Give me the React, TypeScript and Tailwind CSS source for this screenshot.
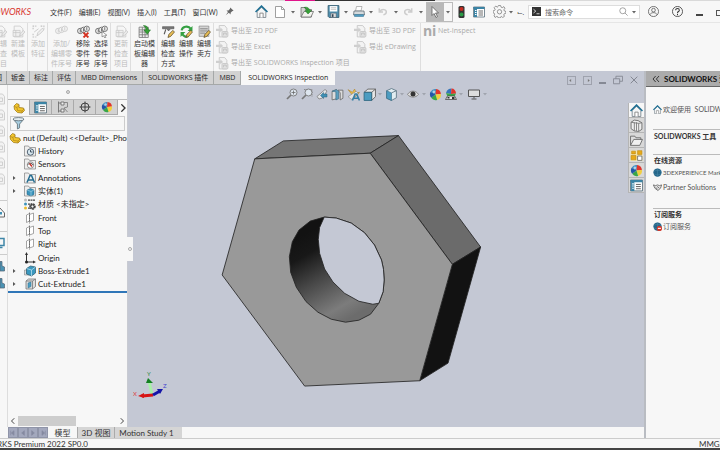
import type { ReactNode } from "react";

type IconProps = { className?: string; faded?: boolean };

const Svg = ({
	className = "size-3",
	children,
	box = "0 0 24 24",
}: {
	className?: string;
	children: ReactNode;
	box?: string;
}) => (
	<svg viewBox={box} className={`shrink-0 ${className}`} fill="none" aria-hidden="true">
		{children}
	</svg>
);

const Caret = ({ light }: { light?: boolean }) => (
	<Svg className="size-1" box="0 0 8 8">
		<path d="M0 2h8L4 7z" fill={light ? "#a0a4ae" : "#666"} />
	</Svg>
);

const HomeIcon = ({ className }: IconProps) => (
	<Svg className={className}>
		<path d="M4 12v11h16V12l-8-8z" fill="#f4f6f7" stroke="#6f7d85" strokeWidth="1.5" />
		<path d="M9 23v-8h6v8" fill="#fff" stroke="#777" strokeWidth="1.5" />
		<path d="M1 13L12 2l11 11" stroke="#1f6f93" strokeWidth="3" />
	</Svg>
);

const NewIcon = () => (
	<Svg className="h-3 w-[10px]" box="0 0 20 24">
		<path d="M1 1h12l6 6v16H1z" fill="#fff" stroke="#888" strokeWidth="1.6" />
		<path d="M13 1v6h6" stroke="#888" strokeWidth="1.6" />
	</Svg>
);

const OpenIcon = () => (
	<Svg className="h-3 w-[14px]" box="0 0 28 24">
		<path d="M2 22V3h9v4h12v15z" fill="#d5d5d2" stroke="#666" strokeWidth="1.5" />
		<path d="M2 22l6-11h19l-5 11z" fill="#f2f2ee" stroke="#666" strokeWidth="1.5" />
		<path d="M8 3c6-2 11 1 11 6h4l-7 7-6-7h4c0-2-2-4-6-6z" fill="#37a237" stroke="#1e7022" />
	</Svg>
);

const SaveIcon = () => (
	<Svg className="size-[13px]">
		<path d="M2 1h20v22H4l-2-2z" fill="#4f8fae" stroke="#355b6e" strokeWidth="1.5" />
		<path d="M5 2h14v10H5z" fill="#fff" />
		<path d="M7 5h10M7 8h10" stroke="#999" />
		<path d="M7 15h10v8H7z" fill="#ddd" stroke="#456" />
		<path d="M9 17h3v5H9z" fill="#345" />
	</Svg>
);

const PrintIcon = () => (
	<Svg className="size-3">
		<path d="M7 1h11l-2 9H5z" fill="#fff" stroke="#777" />
		<path d="M2 10h20l1 8H1z" fill="#d4d9dc" stroke="#5c6870" strokeWidth="1.5" />
		<path d="M3 17h18v4H3z" fill="#4f9bc1" stroke="#336f8d" />
	</Svg>
);

const UndoIcon = ({ className }: IconProps) => (
	<Svg className={className}>
		<path d="M3 3v9h9M4 11c5-7 16-6 16 1 0 4-3 6-7 7" stroke="#ccc" strokeWidth="3.5" />
	</Svg>
);

const PointerIcon = () => (
	<Svg className="h-3 w-2" box="0 0 16 24">
		<path d="M2 1v18l4-4 4 8 3-2-4-7h6z" fill="#fff" stroke="#555" strokeWidth="1.5" />
	</Svg>
);

const TrafficIcon = () => (
	<Svg className="h-3 w-[7px]" box="0 0 14 24">
		<rect x="1" width="12" height="24" rx="3" fill="#333" />
		<circle cx="7" cy="6" r="4" fill="#c52c22" />
		<circle cx="7" cy="17" r="4" fill="#299b45" />
	</Svg>
);

const ListIcon = ({ className }: IconProps) => (
	<Svg className={className}>
		<path d="M1 2h22v20H1z" fill="#fff" stroke="#506774" strokeWidth="1.5" />
		<path d="M1 2h22v4H1zM2 6h6v16H2z" fill="#3b84a5" />
		<path d="M4 9h3M4 13h3M4 17h3" stroke="#fff" strokeWidth="2" />
		<path d="M11 10h9M11 14h9M11 18h9" stroke="#555" strokeWidth="1.7" />
	</Svg>
);

const GearIcon = () => (
	<Svg className="size-[13px]">
		<path
			d="M10 1h4l1 3 2 1 3-2 2 3-2 3 1 2 3 1v3l-3 1-1 2 1 3-3 2-3-2-1 1-1 2h-3l-1-2-2-1-3 2-2-3 1-3-1-2-2-1v-3l3-1 1-2-2-3 3-3 3 2 1-1z"
			stroke="#777"
			strokeWidth="1.4"
		/>
		<circle cx="12" cy="12.5" r="4" stroke="#777" strokeWidth="1.4" />
	</Svg>
);

const SheetIcon = ({ faded }: IconProps) => (
	<Svg className={faded ? "size-[13px] opacity-30" : "size-[13px]"}>
		<path d="M4 2h11l5 5v15H4z" fill="#f4f4f4" stroke="#666" strokeWidth="1.5" />
		<path d="M2 10h13v11H2zM2 14h13M7 10v11" fill="#ddd" stroke="#555" strokeWidth="1.3" />
		<path d="M14 20l2-5 5-5 3 3-6 6z" fill="#ccc" stroke="#555" strokeWidth="1.3" />
	</Svg>
);

const FeatureIcon = () => (
	<Svg className="size-[13px] opacity-30">
		<path d="M2 8V2h6M16 2h6v6M2 16v6h6" stroke="#444" strokeWidth="2" strokeDasharray="3 2" />
		<path d="M4 13l8-6M9 20l2-6 8-8 3 3-8 8z" fill="#ddd" stroke="#555" strokeWidth="1.5" />
	</Svg>
);

const BalloonIcon = ({ kind = "add" }: { kind?: string }) => (
	<Svg className={kind === "add" ? "size-[13px] opacity-30" : "size-[13px]"}>
		<circle cx="6" cy="11" r="5" fill="#eee" stroke="#555" strokeWidth="1.4" />
		<circle cx="12" cy="9" r="5" fill="#eee" stroke="#555" strokeWidth="1.4" />
		<circle cx="18" cy="7" r="5" fill="#eee" stroke="#555" strokeWidth="1.4" />
		<path d="M6 8v6M12 6v6M18 4v6" stroke="#555" strokeWidth="1.4" />
		{kind === "remove" && <path d="M12 14l9 9M21 14l-9 9" stroke="#d5301f" strokeWidth="3.5" />}
		{kind === "select" && <path d="M13 12v10l3-2 2 4 2-1-2-4h4z" fill="#fff" stroke="#555" />}
	</Svg>
);

const TemplateIcon = () => (
	<Svg className="size-[13px]">
		<path d="M2 4h17v19H2zM2 9h17M2 13h17M2 18h17M8 4v19M13 4v19" fill="#eee" stroke="#777" strokeWidth="1.5" />
		<path d="M10 1c6 0 9 3 9 8h4l-6 8-6-8h4c0-3-2-6-5-8z" fill="#37a237" stroke="#1e7022" />
	</Svg>
);

const Pencil = () => (
	<path d="M11 23l2-6 7-7 3 3-7 8z" fill="#e9bf56" stroke="#5b4a28" strokeWidth="1.4" />
);

const CaliperIcon = () => (
	<Svg className="size-[13px]">
		<path d="M1 3h21v4h-6l-4 4-3-4H1z" fill="#777" stroke="#444" />
		<path d="M7 8l-3 9" stroke="#555" strokeWidth="2" />
		<Pencil />
	</Svg>
);

const CycleIcon = () => (
	<Svg className="size-[13px]">
		<path d="M3 10c1-7 12-10 17-3" stroke="#35a043" strokeWidth="4" />
		<path d="M23 2v9h-9zM1 22v-9h9z" fill="#35a043" />
		<path d="M4 16c2 5 7 7 12 4" stroke="#35a043" strokeWidth="4" />
		<Pencil />
	</Svg>
);

const NotesIcon = () => (
	<Svg className="size-[13px]">
		<path d="M2 2h18v19H2z" fill="#d5d5d5" stroke="#888" strokeWidth="1.3" />
		<path d="M4 7h14M4 11h14M4 15h9" stroke="#777" strokeWidth="1.5" />
		<Pencil />
	</Svg>
);

const ExportIcon = () => (
	<Svg className="size-[13px] opacity-35">
		<path d="M6 6V1h10l4 5v16H6z" fill="#eee" stroke="#666" strokeWidth="1.5" />
		<path d="M0 7h8V4l5 5-5 5v-3H0z" fill="#888" />
		<rect x="11" y="12" width="11" height="10" rx="2" fill="#bbb" stroke="#666" strokeWidth="1.5" />
		<path d="M14 19v-4h5v4" stroke="#555" strokeWidth="1.5" />
	</Svg>
);

const PartIcon = ({ className }: IconProps) => (
	<Svg className={className}>
		<path d="M2 8l5-5 5 2v6l9 1 2 5-5 5-9-1-6-6z" fill="#f2c62e" stroke="#9b7615" strokeWidth="1.5" />
		<path d="M3 9l5 2 1 6 9 1 4-4M8 11l4-4M18 18v3" stroke="#a77f18" strokeWidth="1.3" />
	</Svg>
);

const ConfigIcon = () => (
	<Svg>
		<path d="M3 1v22M3 4h6M3 20h6" stroke="#666" strokeWidth="1.6" />
		<path d="M8 2h6v6H8zM8 16h6v6H8z" fill="#eee" stroke="#666" strokeWidth="1.6" />
		<path d="M14 3h7v9l-7 2 7 8" stroke="#777" strokeWidth="1.6" />
	</Svg>
);

const TargetIcon = () => (
	<Svg>
		<circle cx="12" cy="12" r="8" stroke="#333" strokeWidth="1.8" />
		<path d="M12 1v22M1 12h22" stroke="#333" strokeWidth="1.8" />
	</Svg>
);

const BallIcon = ({ className }: IconProps) => (
	<Svg className={className}>
		<path d="M12 12L3 7a10 10 0 0 1 10-5z" fill="#3a8ec4" />
		<path d="M12 12l1-10a10 10 0 0 1 9 9z" fill="#e0342c" />
		<path d="M12 12l10-1a10 10 0 0 1-7 11z" fill="#f2cf3f" />
		<path d="M12 12l3 10a10 10 0 0 1-11-4z" fill="#3aa648" />
		<path d="M12 12l-8 6A10 10 0 0 1 3 7z" fill="#2257a8" />
		<circle cx="9" cy="7" r="2.5" fill="#fff" opacity=".6" />
	</Svg>
);

const FunnelIcon = () => (
	<Svg className="size-[13px]">
		<path d="M2 4l8 9v9l4-2v-7l8-9z" fill="#a9cfe2" stroke="#5a6a73" strokeWidth="1.5" />
		<ellipse cx="12" cy="4" rx="10" ry="3" fill="#e5eef2" stroke="#5a6a73" strokeWidth="1.5" />
	</Svg>
);

const FolderIcon = ({ children }: { children: ReactNode }) => (
	<Svg>
		<path d="M1 22V2h8l2 3h12v17z" fill="#eee" stroke="#888" strokeWidth="1.5" />
		{children}
	</Svg>
);

const HistoryIcon = () => (
	<FolderIcon>
		<circle cx="13" cy="14" r="6.5" fill="#d7e7ef" stroke="#456" strokeWidth="1.8" />
		<path d="M13 10v4h4" stroke="#345" strokeWidth="1.8" />
	</FolderIcon>
);

const SensorIcon = () => (
	<FolderIcon>
		<circle cx="13" cy="14" r="6.5" fill="#fff" stroke="#777" strokeWidth="1.5" />
		<path d="M8 13c1-3 8-4 10 1" stroke="#444" strokeWidth="2" />
		<path d="M11 11l5 6" stroke="#c73027" strokeWidth="3" />
	</FolderIcon>
);

const AnnotationIcon = () => (
	<FolderIcon>
		<path d="M6 21l6-14h3l6 14M9 16h9" stroke="#246d91" strokeWidth="3" />
	</FolderIcon>
);

const SolidIcon = () => (
	<FolderIcon>
		<path d="M6 10l7-3 7 3v9l-6 3-8-3z" fill="#3b94bc" stroke="#1e5f7e" />
		<path d="M6 10l8 3 6-3M14 13v9" stroke="#c6e5f1" />
	</FolderIcon>
);

const MaterialIcon = () => (
	<Svg>
		<circle cx="3" cy="4" r="3" fill="#bbb" />
		<circle cx="3" cy="12" r="3" fill="#3d93bb" />
		<circle cx="3" cy="20" r="3" fill="#e9bb2e" />
		<path d="M8 4h15M8 12h8M8 20h4" stroke="#444" strokeWidth="2.5" strokeDasharray="4 1" />
		<circle cx="17" cy="17" r="4.5" stroke="#444" strokeWidth="4" strokeDasharray="3 1" />
		<circle cx="17" cy="17" r="3.5" stroke="#444" strokeWidth="2" />
	</Svg>
);

const PlaneIcon = () => (
	<Svg>
		<path d="M5 6l6-3v15l-6 3zM11 5l8-3v15l-8 3z" fill="#fff" stroke="#888" strokeWidth="1.5" />
		<path d="M11 1v22" stroke="#555" strokeWidth="1.3" strokeDasharray="3 2" />
	</Svg>
);

const OriginIcon = () => (
	<Svg>
		<path d="M5 3v17h15" stroke="#333" strokeWidth="2" />
		<path d="M5 0L2 6h6zM24 20l-6-3v6z" fill="#333" />
		<circle cx="5" cy="20" r="3" fill="#222" />
	</Svg>
);

const ExtrudeIcon = () => (
	<Svg>
		<path d="M1 10h9v10H1z" fill="#ddd" stroke="#777" />
		<path d="M5 7l8-5 10 2v12l-8 6-10-4z" fill="#3a98bf" stroke="#28596f" strokeWidth="1.4" />
		<path d="M5 7l10 3 8-6M15 10v12" stroke="#bde1ef" strokeWidth="1.5" />
	</Svg>
);

const CutIcon = () => (
	<Svg>
		<path d="M4 6l5-4h14v15l-6 5H4z" fill="#ddd" stroke="#777" strokeWidth="1.6" />
		<path d="M17 22V6l6-4M4 6h13" stroke="#777" strokeWidth="1.6" />
		<path d="M8 10l6-2v9l-6 3z" fill="#4b9fc4" stroke="#326e88" />
	</Svg>
);

const ZoomIcon = ({ area }: { area?: boolean }) => (
	<Svg>
		{area && <path d="M6 3h16v15" stroke="#777" strokeWidth="1.5" strokeDasharray="3 2" />}
		<path d="M10 14L2 22" stroke="#777" strokeWidth="3.5" />
		<circle cx="15" cy="9" r="7" fill="#dde5ee" stroke="#777" strokeWidth="1.8" />
		{!area && <path d="M15 5v8M11 9h8" stroke="#666" strokeWidth="1.5" />}
	</Svg>
);

const PreviousViewIcon = () => (
	<Svg>
		<path d="M2 17L18 3l4 3-9 14-7 2z" fill="#e3e5e8" stroke="#777" strokeWidth="1.5" />
		<path d="M9 15l6-6v3h7v6h-7v3z" fill="#3f8fb4" stroke="#2c657f" />
	</Svg>
);

const SectionIcon = () => (
	<Svg className="size-[13px]">
		<path d="M2 6l8-3v17l-8 2zM13 4h9v15l-5 3V9z" fill="#dcdcdc" stroke="#666" strokeWidth="1.5" />
		<path d="M2 6l8-3 4 3v14l-5 2V7z" fill="#5b9fbf" stroke="#2c657f" />
	</Svg>
);

const DynamicIcon = () => (
	<Svg className="size-[13px]">
		<path d="M2 3l8 5 4-6 3 7 6-1-5 6-5 3z" fill="#efc24c" stroke="#a77c26" />
		<path d="M2 16L17 6l4 4L8 21z" fill="#e4e4e4" stroke="#777" />
		<path d="M10 23l5-12h3l5 12M12 19h9" stroke="#377fa4" strokeWidth="3" />
	</Svg>
);

const CubeIcon = ({ flat }: { flat?: boolean }) => (
	<Svg className="size-[13px]">
		{flat ? (
			<>
				<path d="M2 8L9 2h14v14l-7 7V8z" fill="#e7e7e7" stroke="#555" strokeWidth="1.5" />
				<path d="M2 8h14v15H2z" fill="#4b9cc1" stroke="#2c657f" strokeWidth="1.5" />
				<path d="M16 8l7-6" stroke="#555" strokeWidth="1.5" />
			</>
		) : (
			<>
				<path d="M3 5l9-4 9 4v13l-9 5-9-4z" fill="#e1edf1" stroke="#55707f" strokeWidth="1.5" />
				<path d="M3 5l9 4v14l-9-4z" fill="#4b9cc1" stroke="#2c657f" />
				<path d="M12 9l9-4" stroke="#55707f" strokeWidth="1.5" />
			</>
		)}
	</Svg>
);

const EyeIcon = () => (
	<Svg>
		<path d="M1 13c5-9 17-9 22 0-6 7-16 7-22 0z" fill="#ddd" stroke="#888" strokeWidth="2" />
		<circle cx="12" cy="12" r="5" fill="#333" />
	</Svg>
);

const SceneIcon = () => (
	<Svg>
		<path d="M12 12L2 10C4 3 8 1 13 1z" fill="#3575b9" />
		<path d="M12 12l1-11c5 0 9 4 9 10z" fill="#e0342c" />
		<path d="M2 10l10 2 10-1-3 6H5z" fill="#3aa648" />
		<path d="M1 23l4-7h14l4 7z" fill="#e8e8e8" stroke="#444" strokeWidth="1.5" />
		<path d="M5 18h4v3H5zM14 18h5v4h-5z" fill="#333" />
	</Svg>
);

const MonitorIcon = () => (
	<Svg>
		<path d="M1 4h22v13H1z" fill="#ddd" stroke="#555" strokeWidth="2" />
		<path d="M12 17v4M7 22h10" stroke="#555" strokeWidth="2" />
	</Svg>
);

const LibraryIcon = () => (
	<Svg className="size-[13px]">
		<path d="M2 6l6-4 7 1 7 4v12l-6 4-8-1-6-4z" fill="#eee" stroke="#666" strokeWidth="1.6" />
		<path d="M8 6v16M12 6v16M16 8v15M2 6l6 1 8 1 6-1" stroke="#777" strokeWidth="1.6" />
	</Svg>
);

const FilesIcon = () => (
	<Svg className="size-[13px]">
		<path d="M1 21V4h8l2 3h9v4" fill="#ddd" stroke="#666" strokeWidth="1.6" />
		<path d="M1 21l6-11h16l-5 11z" fill="#f0f0f0" stroke="#666" strokeWidth="1.6" />
	</Svg>
);

const PaletteIcon = () => (
	<Svg className="size-[13px]">
		<path d="M1 3h22v19H1z" fill="#f7e7ab" />
		<path d="M3 4h7v5H3zM2 12h9v8H2zM14 3h8v7h-8z" fill="#e7aa18" stroke="#b58112" />
		<path d="M14 13h8v8h-8z" fill="#fff" stroke="#666" strokeWidth="1.5" />
	</Svg>
);

const GlobeIcon = ({ badge }: { badge?: boolean }) => (
	<Svg className="size-[9px]">
		<circle cx="12" cy="12" r="11" fill="#24668a" />
		<path d="M2 9c7-4 13-4 20 0M12 1v22M3 16c6 3 12 3 18 0" stroke="#4f8cab" strokeWidth="1.2" />
		{badge && <circle cx="17" cy="17" r="7" fill="#d0382c" />}
		{badge && <path d="M13 17h8" stroke="#fff" strokeWidth="3" />}
	</Svg>
);

const PartnerIcon = () => (
	<Svg className="size-[9px]">
		<path d="M1 5l6 2 5-2 5 2 6-2-3 9-7 6-8-6z" fill="#e5e5e5" stroke="#555" strokeWidth="2" />
		<path d="M7 12l5 4M11 9l6 5" stroke="#555" strokeWidth="2" />
	</Svg>
);

const PinIcon = () => (
	<Svg className="size-[9px]">
		<path d="M14 1l9 9-4 1-4 4v5l-5-5-8 7 6-9-4-4h5l4-4z" fill="#666" />
	</Svg>
);

const menus = ["文件(F)", "编辑(E)", "视图(V)", "插入(I)", "工具(T)", "窗口(W)"];

type Command = { lines: string[]; icon: ReactNode; off?: boolean; wide?: boolean };

const ribbon: Command[][] = [
	[
		{ lines: ["编辑", "检查", "项目"], icon: <SheetIcon faded />, off: true },
		{ lines: ["新建", "模板"], icon: <SheetIcon faded />, off: true },
	],
	[{ lines: ["添加", "特征"], icon: <FeatureIcon />, off: true }],
	[
		{ lines: ["添加/", "编辑零", "件序号"], icon: <BalloonIcon />, off: true, wide: true },
		{ lines: ["移除", "零件", "序号"], icon: <BalloonIcon kind="remove" /> },
		{ lines: ["选择", "零件", "序号"], icon: <BalloonIcon kind="select" /> },
	],
	[{ lines: ["更新", "检查", "项目"], icon: <SheetIcon faded />, off: true }],
	[{ lines: ["启动模", "板编辑", "器"], icon: <TemplateIcon />, wide: true }],
	[
		{ lines: ["编辑", "检查", "方式"], icon: <CaliperIcon /> },
		{ lines: ["编辑", "操作"], icon: <CycleIcon /> },
		{ lines: ["编辑", "卖方"], icon: <NotesIcon /> },
	],
];

const tabs = ["图", "钣金", "标注", "评估", "MBD Dimensions", "SOLIDWORKS 插件", "MBD"];

const tree = [
	{ label: "History", icon: <HistoryIcon /> },
	{ label: "Sensors", icon: <SensorIcon /> },
	{ label: "Annotations", icon: <AnnotationIcon />, open: true },
	{ label: "实体(1)", icon: <SolidIcon />, open: true },
	{ label: "材质 <未指定>", icon: <MaterialIcon /> },
	{ label: "Front", icon: <PlaneIcon /> },
	{ label: "Top", icon: <PlaneIcon /> },
	{ label: "Right", icon: <PlaneIcon /> },
	{ label: "Origin", icon: <OriginIcon /> },
	{ label: "Boss-Extrude1", icon: <ExtrudeIcon />, open: true },
	{ label: "Cut-Extrude1", icon: <CutIcon />, open: true },
];

const TitleBar = () => (
	<header className="flex h-[21px] shrink-0 items-center bg-[#f7f7f7] text-[7px] text-[#333]">
		<div className="flex w-[31px] shrink-0 justify-end overflow-hidden text-[9px] italic text-[#d8352e]">
			<b>SOLID</b>WORKS
		</div>
		<nav className="ml-[19px] flex shrink-0 gap-[7px]">
			{menus.map((name) => (
				<button key={name} className="whitespace-nowrap">
					{name}
				</button>
			))}
		</nav>
		<button aria-label="Pin" className="ml-[3px] flex w-[18px] shrink-0 justify-center">
			<PinIcon />
		</button>
		<div className="ml-4 flex shrink-0 items-center gap-[5px]">
			<button aria-label="Home" className="mr-[2px]"><HomeIcon className="size-[13px]" /></button>
			<button aria-label="New" className="flex items-center gap-[6px]"><NewIcon /><Caret /></button>
			<button aria-label="Open" className="flex items-center gap-1"><OpenIcon /><Caret /></button>
			<button aria-label="Save" className="flex items-center gap-1"><SaveIcon /><Caret /></button>
			<button aria-label="Print" className="flex items-center gap-1"><PrintIcon /><Caret /></button>
			<button aria-label="Undo" className="flex items-center gap-[6px]"><UndoIcon className="size-[10px]" /><Caret /></button>
			<button aria-label="Redo" className="flex items-center gap-[6px]"><UndoIcon className="size-[10px] -scale-x-100" /><Caret /></button>
		</div>
		<button aria-label="Select" className="ml-[3px] flex h-5 shrink-0 items-center border border-[#bbb]">
			<span className="flex h-full w-[17px] items-center justify-center bg-[#b8b8b8]"><PointerIcon /></span>
			<span className="px-[2px]"><Caret /></span>
		</button>
		<div className="ml-[5px] flex shrink-0 items-center gap-2">
			<button aria-label="Rebuild"><TrafficIcon /></button>
			<button aria-label="Options list"><ListIcon className="size-3" /></button>
			<button aria-label="Settings" className="flex items-center gap-[3px]"><GearIcon /><Caret /></button>
		</div>
		<span className="ml-1 text-[#444]">⌙.</span>
		<div className="ml-auto flex h-[14px] w-[112px] shrink-0 items-center gap-1 border border-[#ddd] bg-white px-[3px]">
			<Svg className="size-[9px]">
				<path d="M0 0h24v24H0z" fill="#333" />
				<path d="M4 6l6 5-6 5M12 18h8" stroke="#fff" strokeWidth="2" />
			</Svg>
			<input
				aria-label="搜索命令"
				placeholder="搜索命令"
				className="min-w-0 flex-1 bg-transparent text-[7px] outline-none placeholder:text-[#666]"
			/>
			<Svg className="size-[9px]">
				<circle cx="10" cy="10" r="8" stroke="#888" strokeWidth="2" />
				<path d="M16 16l7 7" stroke="#888" strokeWidth="2" />
			</Svg>
			<Caret />
		</div>
		<div className="ml-2 flex shrink-0 items-center gap-[13px]">
			<button aria-label="Account">
				<Svg className="size-[11px]">
					<circle cx="12" cy="12" r="11" stroke="#555" strokeWidth="1.7" />
					<circle cx="12" cy="9" r="4" stroke="#555" strokeWidth="1.7" />
					<path d="M4 19c3-6 13-6 16 0" stroke="#555" strokeWidth="1.7" />
				</Svg>
			</button>
			<button aria-label="Help">
				<Svg className="size-[11px]">
					<circle cx="12" cy="12" r="11" stroke="#333" strokeWidth="1.7" />
					<path d="M8 9c0-5 8-5 8 0 0 3-4 3-4 6M12 17v3" stroke="#333" strokeWidth="2.2" />
				</Svg>
			</button>
			<button aria-label="Minimize" className="mt-[6px] h-[2px] w-[7px] bg-[#444]" />
			<button aria-label="Maximize" className="mt-[2px] h-[6px] w-1 border border-r-0 border-[#555]" />
		</div>
	</header>
);

const ExportItem = ({ label }: { label: string }) => (
	<button disabled className="flex h-4 items-center gap-[2px] whitespace-nowrap">
		<ExportIcon />
		{label}
	</button>
);

const Ribbon = () => (
	<div className="flex h-[49px] shrink-0 overflow-hidden border-t border-[#e6e6e6] bg-[#f7f7f7] text-[7px]">
		<div className="-ml-[10px] flex shrink-0">
			{ribbon.map((group, i) => (
				<div key={i} className="flex border-r border-[#dedede] pl-px">
					{group.map((cmd) => (
						<button
							key={cmd.lines.join("")}
							disabled={cmd.off}
							className={`flex flex-col items-center pt-[2px] leading-[10px] ${
								cmd.wide ? "w-[25px]" : "w-[18px]"
							} ${cmd.off ? "text-[#bcbcbc]" : "text-[#333]"}`}>
							{cmd.icon}
							{cmd.lines.map((line) => (
								<span key={line} className="whitespace-nowrap">
									{line}
								</span>
							))}
						</button>
					))}
				</div>
			))}
		</div>
		<div className="flex shrink-0 border-r border-[#dedede] pr-1 font-['Open_Sans','Noto_Sans_CJK_SC',sans-serif] text-[#aaa]">
			<div className="w-[140px] pl-[2px]">
				<ExportItem label="导出至 2D PDF" />
				<ExportItem label="导出至 Excel" />
				<ExportItem label="导出至 SOLIDWORKS Inspection 项目" />
			</div>
			<div>
				<ExportItem label="导出至 3D PDF" />
				<ExportItem label="导出 eDrawing" />
			</div>
		</div>
		<button
			disabled
			className="ml-[2px] flex h-4 items-center gap-[2px] font-['Open_Sans',sans-serif] text-[#aaa]">
			<b className="w-[13px] text-[14px] leading-4">ni</b>
			Net-Inspect
		</button>
	</div>
);

const TabRow = () => (
	<div className="flex h-[14px] shrink-0 items-center justify-between bg-[#c4c8d4]">
		<div className="-ml-[9px] flex h-full min-w-0 font-['Open_Sans','Noto_Sans_CJK_SC',sans-serif] text-[7px] text-[#222]">
			{tabs.map((name) => (
				<button
					key={name}
					className={`whitespace-nowrap border-b border-r border-[#a5a8a8] bg-[#d2d2d2] ${
						name.length > 2 ? "px-[5px]" : "px-1"
					}`}>
					{name}
				</button>
			))}
			<button className="whitespace-nowrap bg-[#f7f7f7] px-[7px]">SOLIDWORKS Inspection</button>
		</div>
		<div className="flex items-center gap-[7px] pr-[6px] pt-1">
			{["M11 8l-5 4 5 4z", "M13 8l5 4-5 4z"].map((d) => (
				<button key={d} aria-label="Dock">
					<Svg className="size-[9px]">
						<path d="M1 1h22v22H1z" stroke="#8b8f99" strokeWidth="2" />
						<path d={d} fill="#777" />
					</Svg>
				</button>
			))}
			<button aria-label="Minimize document" className="mt-[6px] h-[2px] w-[7px] bg-[#858994]" />
			<button aria-label="Restore document">
				<Svg className="size-[10px]">
					<path d="M1 9h15v12H1zM7 9V3h16v12h-7" stroke="#858994" strokeWidth="2.2" />
				</Svg>
			</button>
			<button aria-label="Close document">
				<Svg className="size-2">
					<path d="M2 2l20 20M22 2L2 22" stroke="#777b85" strokeWidth="2.5" />
				</Svg>
			</button>
		</div>
	</div>
);

const SideStrip = () => (
	<div className="flex w-2 shrink-0 flex-col overflow-hidden border-r border-[#ddd] bg-[#f7f7f7] pt-2">
		{[1, 2, 3, 4, 5, 6].map((n) => (
			<Svg key={n} className="mb-1 h-3 w-[5px]" box="0 0 10 24">
				<path d="M0 2h5l4 5v15H0M0 10h5v7H0" fill="#f2f2f2" stroke="#ccc" strokeWidth="1.8" />
			</Svg>
		))}
		<div className="mt-[11px] border-t border-[#ccc] pt-[6px]">
			<Svg className="h-3 w-[5px]" box="0 0 10 24">
				<path d="M0 2l9 10v8H0" stroke="#666" strokeWidth="2" />
				<path d="M0 10h4v5H0z" fill="#3f8fb4" />
			</Svg>
		</div>
		<div className="mt-3 border-y border-[#ccc] py-[5px]">
			<Svg className="h-3 w-[5px]" box="0 0 10 24">
				<path d="M0 3h8v14H0M0 21h5" stroke="#3f86a8" strokeWidth="3" />
			</Svg>
		</div>
		{[1, 2].map((n) => (
			<Svg key={n} className="mt-[5px] h-3 w-[5px]" box="0 0 10 24">
				<path d="M0 3h4v9l5 2v8H0z" fill="#4a93b4" stroke="#567" strokeWidth="1.5" />
			</Svg>
		))}
	</div>
);

const FeatureManager = () => (
	<section className="relative z-10 flex w-[120px] shrink-0 flex-col border-r border-[#c9cbd2] bg-[#f7f7f7]">
		<div className="flex h-[14px] shrink-0 items-center justify-center">
			<span className="size-1 rounded-full border border-[#aaa] bg-[#ddd]" />
		</div>
		<div className="flex h-4 shrink-0 border-t border-[#bbb]">
			{[
				{ name: "Features", icon: <PartIcon className="size-3" /> },
				{ name: "Properties", icon: <ListIcon className="size-[13px]" /> },
				{ name: "Configurations", icon: <ConfigIcon /> },
				{ name: "Dimensions", icon: <TargetIcon /> },
				{ name: "Display", icon: <BallIcon className="size-3" /> },
			].map((tab, i) => (
				<button
					key={tab.name}
					aria-label={tab.name}
					className={`flex w-[22px] items-center justify-center border-r border-[#aaa] ${
						i === 0 ? "" : "border-b bg-[#d2d2d2]"
					}`}>
					{tab.icon}
				</button>
			))}
			<button aria-label="More" className="flex flex-1 items-center justify-center">
				<Svg className="size-2">
					<path d="M7 1l11 11L7 23" stroke="#333" strokeWidth="4" />
				</Svg>
			</button>
		</div>
		<div className="mx-[2px] mt-px flex h-[15px] shrink-0 items-center border border-[#ccc] pl-px">
			<FunnelIcon />
		</div>
		<ul className="grid h-[162px] shrink-0 grid-rows-12 overflow-hidden border-b-2 border-[#2f76b8] text-[#222]">
			<li className="flex items-center gap-[2px] whitespace-nowrap pl-px">
				<PartIcon className="size-3" />
				nut (Default) &lt;&lt;Default&gt;_Photo
			</li>
			{tree.map((node) => (
				<li key={node.label} className="flex items-center gap-[2px] whitespace-nowrap pl-1">
					<span className="flex w-[10px] shrink-0">
						{node.open && (
							<Svg className="size-1" box="0 0 8 8">
								<path d="M2 0l5 4-5 4z" fill="#555" />
							</Svg>
						)}
					</span>
					{node.icon}
					{node.label}
				</li>
			))}
		</ul>
		<div className="mt-auto flex h-[13px] shrink-0 items-center px-[2px]">
			<Svg className="size-[6px]">
				<path d="M17 1L6 12l11 11" stroke="#444" strokeWidth="4" />
			</Svg>
			<div className="mx-[2px] h-[10px] flex-1">
				<div className="h-full w-7/12 bg-[#cdcdcd]" />
			</div>
			<Svg className="size-[6px]">
				<path d="M7 1l11 11L7 23" stroke="#444" strokeWidth="4" />
			</Svg>
		</div>
		<button
			aria-label="Collapse panel"
			className="absolute -right-[6px] top-[152px] flex h-6 w-[6px] items-center justify-center bg-[#f7f7f7]">
			<span className="size-1 rounded-full border border-[#aaa]" />
		</button>
	</section>
);

const ViewToolbar = () => (
	<div className="flex h-[18px] shrink-0 items-center justify-center gap-[3px]">
		<button aria-label="Zoom to fit"><ZoomIcon /></button>
		<button aria-label="Zoom to area"><ZoomIcon area /></button>
		<button aria-label="Previous view"><PreviousViewIcon /></button>
		<button aria-label="Section view"><SectionIcon /></button>
		<button aria-label="Dynamic annotation"><DynamicIcon /></button>
		<button aria-label="View orientation" className="flex items-center gap-[2px]"><CubeIcon flat /><Caret light /></button>
		<button aria-label="Display style" className="flex items-center gap-[2px]"><CubeIcon /><Caret light /></button>
		<button aria-label="Hide items" className="flex items-center gap-[3px]"><EyeIcon /><Caret light /></button>
		<button aria-label="Appearance"><BallIcon className="size-[13px]" /></button>
		<button aria-label="Scene" className="flex items-center gap-[2px]"><SceneIcon /><Caret light /></button>
		<button aria-label="View settings" className="ml-[2px] flex items-center gap-[3px]"><MonitorIcon /><Caret light /></button>
	</div>
);

const Nut = () => (
	<svg viewBox="128 103 517 324" className="min-h-0 w-full flex-1" role="img" aria-label="Hex nut">
		<defs>
			<linearGradient id="bore" gradientUnits="userSpaceOnUse" x1="270" y1="350" x2="410" y2="600">
				<stop offset="0" stopColor="#121212" />
				<stop offset=".2" stopColor="#181818" />
				<stop offset=".5" stopColor="#484848" />
				<stop offset=".85" stopColor="#7c7c7c" />
				<stop offset="1" stopColor="#6c6c6c" />
			</linearGradient>
		</defs>
		<g transform="translate(210 120) scale(.3333)" stroke="#222" strokeWidth="2.5" strokeLinejoin="round">
			<path d="M135 116l86-54 346-16-85 53z" fill="#757575" />
			<path d="M482 99l85-53 247 335-85 52z" fill="#6b6b6b" />
			<path d="M729 433l85-52-98 349-85 53z" fill="#121212" />
			<path d="M135 116l347-17 247 334-98 350-346 16L37 465z" fill="#999" />
			<path
				d="M344 291l-42 12-34 27-20 35-9 45 4 47 17 45 29 43 36 32 40 21 43 9 40-6 35-18 25-33 13-35 3-35-2-32-6-28-21-45-30-37-40-29-45-15z"
				fill="url(#bore)"
			/>
			<path
				d="M344 291l-14 31-4 36 4 42 15 47 25 39 35 34 43 24 42 9 18-3 13-35 3-35-2-32-6-28-21-45-30-37-40-29-45-15z"
				fill="#c4c8d4"
			/>
		</g>
	</svg>
);

const Triad = () => (
	<svg viewBox="0 0 36 32" className="absolute bottom-6 left-[5px] h-8 w-9" aria-hidden="true">
		<path d="M19 24l-3-14" stroke="#a8f0a8" strokeWidth="3" />
		<path d="M13 12l2-5 5 5z" fill="#138022" />
		<path d="M20 24L9 25" stroke="#d71414" strokeWidth="3" />
		<path d="M5 25l6-3v5z" fill="#d71414" />
		<path d="M20 24l7-4" stroke="#1515a8" strokeWidth="3" />
		<path d="M30 18l-6 0 3 5z" fill="#1515a8" />
		<text x="0" y="25" fontSize="6" fill="#d44">X</text>
		<text x="14" y="5" fontSize="6" fill="#384">Y</text>
		<text x="30" y="17" fontSize="6" fill="#44c">Z</text>
	</svg>
);

const TaskPaneTabs = () => (
	<div className="absolute right-0 top-[18px] flex w-4 flex-col">
		{[
			{ name: "Resources", icon: <HomeIcon className="size-[13px]" /> },
			{ name: "Design library", icon: <LibraryIcon /> },
			{ name: "File explorer", icon: <FilesIcon /> },
			{ name: "View palette", icon: <PaletteIcon /> },
			{ name: "Appearances", icon: <BallIcon className="size-[13px]" /> },
			{ name: "Custom properties", icon: <ListIcon className="size-[13px]" /> },
		].map((tab, i) => (
			<button
				key={tab.name}
				aria-label={tab.name}
				className={`flex h-[15px] items-center justify-center border-b border-l border-[#b5b5b5] ${
					i === 0 ? "bg-[#f7f7f7]" : "bg-[#d8d8d8]"
				}`}>
				{tab.icon}
			</button>
		))}
	</div>
);

const BottomTabs = () => (
	<div className="flex h-[11px] shrink-0 bg-[#f7f7f7] pl-2 leading-[10px] text-[#333]">
		{["M15 5l-8 7 8 7zM5 5v14", "M16 5l-8 7 8 7z", "M8 5l8 7-8 7z", "M9 5l8 7-8 7zM19 5v14"].map((d) => (
			<button
				key={d}
				aria-label="Scroll tabs"
				className="flex w-[10px] items-center justify-center border border-[#8f94a8] bg-[#a3a8bd]">
				<Svg className="size-2">
					<path d={d} fill="#858aa0" stroke="#858aa0" strokeWidth="2" />
				</Svg>
			</button>
		))}
		<button className="w-[29px]">模型</button>
		<button className="w-[38px] border-x border-[#aaa] bg-[#d5d5d5]">3D 视图</button>
		<button className="w-[67px] bg-[#d5d5d5] pr-1">Motion Study 1</button>
	</div>
);

const TaskPane = () => (
	<aside className="flex w-[76px] shrink-0 flex-col overflow-hidden whitespace-nowrap border-l-2 border-[#b9bcc2] bg-[#f7f7f7] text-[7px] text-[#555]">
		<h2 className="flex h-4 shrink-0 items-center gap-1 border-b border-[#666] bg-[#ababab] pl-[6px] text-[8px] font-bold text-[#111]">
			<Svg className="size-2">
				<path d="M11 3l-8 9 8 9M21 3l-8 9 8 9" stroke="#222" strokeWidth="2.5" />
			</Svg>
			SOLIDWORKS 资源
		</h2>
		<div className="pl-[7px]">
			<a href="#welcome" className="flex h-[42px] items-center gap-px pt-[2px]">
				<HomeIcon className="size-[9px]" />
				<span className="whitespace-pre">欢迎使用  SOLIDWORKS</span>
			</a>
			<h3 className="h-[25px] border-t border-[#bbb] pl-px font-bold leading-[12px] text-[#333]">SOLIDWORKS 工具</h3>
			<div className="h-[54px] border-t border-[#bbb]">
				<h3 className="pl-px font-bold leading-[11px] text-[#333]">在线资源</h3>
				<a href="#market" className="flex h-[13px] items-center gap-px text-[6px]">
					<GlobeIcon />
					3DEXPERIENCE Marketplace
				</a>
				<a href="#partners" className="flex h-4 items-center gap-px">
					<PartnerIcon />
					Partner Solutions
				</a>
			</div>
			<div className="border-t border-[#bbb]">
				<h3 className="pl-px font-bold leading-[11px] text-[#333]">订阅服务</h3>
				<a href="#subscription" className="flex h-3 items-center gap-px">
					<GlobeIcon badge />
					订阅服务
				</a>
			</div>
		</div>
	</aside>
);

const App = () => (
	<div className="flex h-screen flex-col overflow-hidden bg-[#f7f7f7] font-['Lato','Noto_Sans_CJK_SC',sans-serif] text-[8px] leading-[12px]">
		<div className="flex h-px shrink-0 bg-[#d9d9d9]">
			<div className="ml-[285px] w-[30px] bg-[#e0148a]" />
			<div className="w-[120px] bg-[#333]" />
		</div>
		<TitleBar />
		<Ribbon />
		<div className="flex min-h-0 flex-1">
			<div className="flex min-w-0 flex-1 flex-col overflow-hidden">
				<TabRow />
				<div className="flex min-h-0 flex-1">
					<SideStrip />
					<FeatureManager />
					<main className="relative flex min-w-0 flex-1 flex-col bg-[#c4c8d4]">
						<ViewToolbar />
						<Nut />
						<Triad />
						<TaskPaneTabs />
					</main>
				</div>
				<BottomTabs />
			</div>
			<TaskPane />
		</div>
		<footer className="flex h-3 shrink-0 justify-between overflow-hidden whitespace-nowrap border-b-2 border-t border-b-[#444] border-t-[#ccc] leading-[10px] text-[#333]">
			<div className="flex w-[88px] justify-end overflow-hidden">SOLIDWORKS Premium 2022 SP0.0</div>
			<div className="w-[21px] overflow-hidden">MMGS</div>
		</footer>
	</div>
);

export default App;
